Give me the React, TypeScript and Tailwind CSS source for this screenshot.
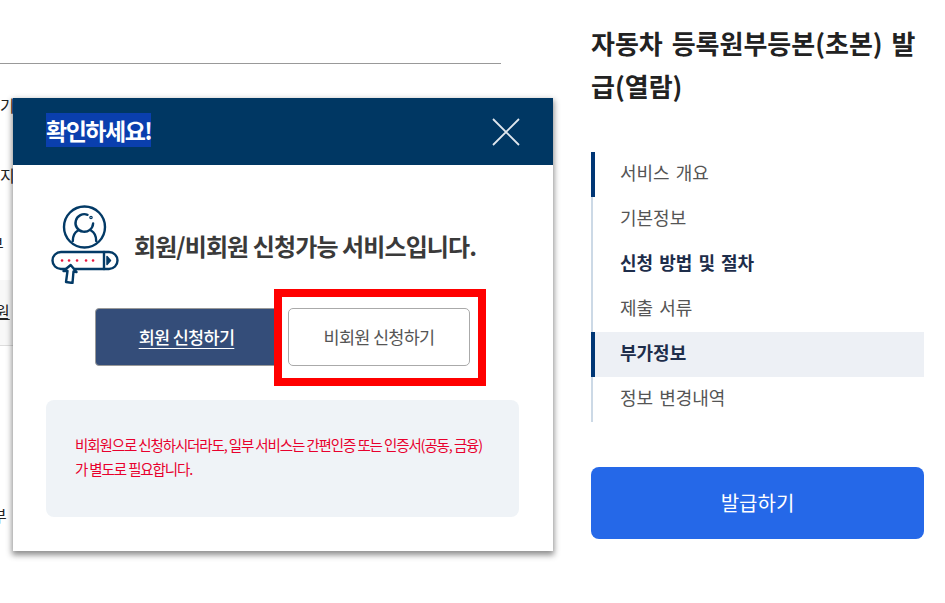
const FONT = "font-['Noto_Sans_CJK_KR','Noto_Sans',sans-serif]";

const navItems = [
  { label: "서비스 개요", mark: true },
  { label: "기본정보" },
  { label: "신청 방법 및 절차", bold: true },
  { label: "제출 서류" },
  { label: "부가정보", bold: true, mark: true, active: true },
  { label: "정보 변경내역" },
];

function LoginIcon() {
  return (
    <svg width="68" height="79" viewBox="0 0 68 79" fill="none" stroke="#033a66" strokeWidth="2.400" strokeLinecap="round" strokeLinejoin="round">
      <circle cx="33.500" cy="22" r="20.500" />
      <path d="M36.500 9.800a8.800 8.800 0 1 0 5.600 8.700" />
      <circle cx="40" cy="12.500" r="0.600" />
      <path d="M21.800 36c0-5 1.700-8.500 5.200-10.500M45.200 36c0-5-1.700-8.500-5.200-10.500" />
      <rect x="1.500" y="47" width="65" height="17" rx="8.500" />
      <path d="M53 47v17" />
      <path d="M56 51.500l3.500 4-3.500 4z" fill="#033a66" strokeWidth="1.500" />
      <g stroke="#e8173f" strokeWidth="2.600">
        <path d="M11 55.500h.1M18 55.500h.1M26 55.500h.1M35 55.500h.1M42 55.500h.1" />
      </g>
      <path d="M19.700 60l5.800 7-3-.5-1 11.500-6.500-1 1.500-11-4 0z" fill="#fff" />
    </svg>
  );
}

export default function App() {
  return (
    <div className={`${FONT} relative flex h-[603px] w-[945px] overflow-hidden bg-white`}>
      {/* Page behind the dialog */}
      <div className="h-full w-[501px] shrink-0 text-[16px] leading-[24px] text-[#222]">
        <div className="h-[64px] border-b border-[#999]" />
        <p className="mt-[29px]">기</p>
        <p className="mt-[46px]">지</p>
        <p className="mt-[45px] -ml-[11px]">부</p>
        <div className="mt-[24px] h-[66px] border-b border-[#ddd] bg-[#f8f8f8] pt-[19px]">
          <p className="-ml-[5px] underline">원</p>
        </div>
        <p className="mt-[157px] -ml-[8px]">부</p>
      </div>

      {/* Side menu */}
      <aside className="ml-[90px] w-[333px] shrink-0 pt-[21px]">
        <h2 className="text-[26px] font-bold leading-[43px] text-[#222] [word-spacing:3px]">
          자동차 등록원부등본(초본) 발급(열람)
        </h2>
        <ul className="mt-[45px] border-l-2 border-[#ccd9e6]">
          {navItems.map((item) => (
            <li
              key={item.label}
              className={`-ml-[2px] flex h-[45px] items-center border-l-4 pb-[4px] pl-[25px] text-[18px] [word-spacing:2px] ${
                item.mark ? "border-[#003675]" : "border-transparent"
              } ${item.active ? "bg-[#edf0f5]" : ""} ${
                item.bold ? "font-bold text-[#1d2d4a]" : "text-[#555]"
              }`}
            >
              {item.label}
            </li>
          ))}
        </ul>
        <button className="mt-[45px] h-[72px] w-full rounded-lg bg-[#2568e8] text-[20px] text-white">
          발급하기
        </button>
      </aside>

      {/* Dialog */}
      <div className="absolute left-[13px] top-[98px] h-[453px] w-[540px] bg-white shadow-[0_3px_6px_1px_rgba(0,0,0,0.45)]">
        <div className="flex h-[67px] items-center justify-between bg-[#003763] px-[33px]">
          <h3 className="-mt-[3px] bg-[#0a3fae] text-[23px] font-bold leading-[34px] tracking-[-1.500px] text-white">확인하세요!</h3>
          <svg width="28" height="28" viewBox="0 0 28 28" stroke="#e0e7ee" strokeWidth="1.800">
            <path d="M1 1l26 26M27 1L1 27" />
          </svg>
        </div>
        <div className="pl-[33px] pr-[34px]">
          <div className="mt-[40px] flex h-[79px] items-center gap-[15px] pl-[5px]">
            <LoginIcon />
            <p className="pt-[3px] text-[24px] font-semibold tracking-[-0.900px] text-[#3a3a3a]">회원/비회원 신청가능 서비스입니다.</p>
          </div>
          <div className="mt-[24px] flex items-center justify-center gap-[10px] pl-[1px]">
            <button className="-ml-[1px] h-[58px] w-[183px] rounded-[4px] border border-[#999] bg-[#344d79] text-[17.500px] font-medium tracking-[-0.700px] text-white underline underline-offset-4">
              회원 신청하기
            </button>
            <div className="relative">
              <button className="h-[58px] w-[182px] rounded-[5px] border border-[#aaa] bg-white text-[17.500px] tracking-[-0.700px] text-[#555]">
                비회원 신청하기
              </button>
              {/* red annotation box over the button */}
              <span className="absolute -bottom-[20px] -left-[14px] -right-[16px] -top-[19px] border-8 border-[#ff0000]" />
            </div>
          </div>
          <div className="mt-[34px] flex h-[117px] items-center rounded-lg bg-[#eff3f7] px-[29px] pb-[4px] text-[14.500px] leading-[24px] tracking-[-1.120px] text-[#e8002d]">
            <p>
              비회원으로 신청하시더라도, 일부 서비스는 간편인증 또는 인증서(공동, 금융)
              <br />
              가 별도로 필요합니다.
            </p>
          </div>
        </div>
      </div>
    </div>
  );
}
